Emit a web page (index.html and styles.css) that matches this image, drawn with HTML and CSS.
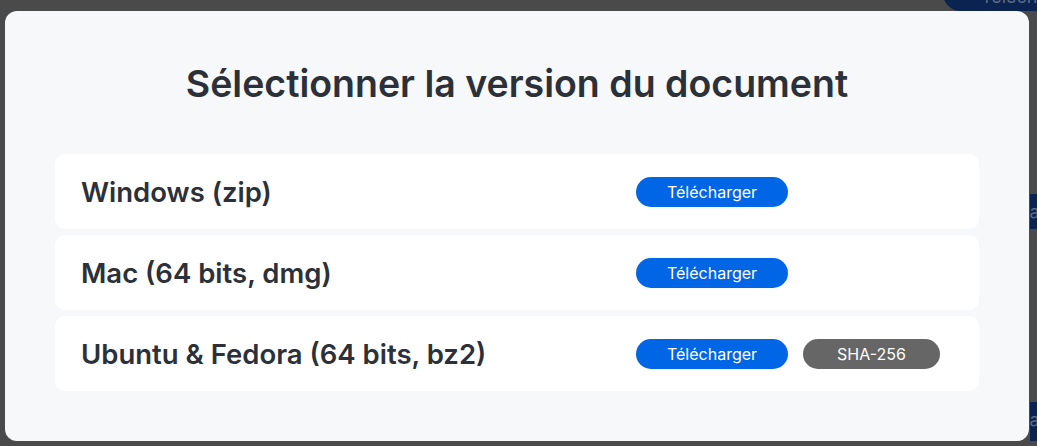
FILE: index.html
```html
<!DOCTYPE html>
<html lang="fr">
<head>
<meta charset="utf-8">
<title>Sélectionner la version du document</title>
<link rel="stylesheet" href="styles.css">
</head>
<body>
<div class="page">
  <div class="bg-btn bg-btn-1">Télécharger</div>
  <div class="bg-btn bg-btn-2">Télécharger</div>
  <div class="bg-btn bg-btn-3">Télécharger</div>
</div>
<div class="modal">
  <h1 class="modal-title">Sélectionner la version du document</h1>
  <div class="versions">
    <div class="version-row">
      <div class="version-name">Windows (zip)</div>
      <div class="version-actions">
        <button class="btn btn-download">Télécharger</button>
      </div>
    </div>
    <div class="version-row">
      <div class="version-name">Mac (64 bits, dmg)</div>
      <div class="version-actions">
        <button class="btn btn-download">Télécharger</button>
      </div>
    </div>
    <div class="version-row">
      <div class="version-name">Ubuntu &amp; Fedora (64 bits, bz2)</div>
      <div class="version-actions">
        <button class="btn btn-download">Télécharger</button>
        <button class="btn btn-sha">SHA-256</button>
      </div>
    </div>
  </div>
</div>
</body>
</html>
```

FILE: styles.css
```css
* { box-sizing: border-box; }
html, body {
  margin: 0;
  padding: 0;
  height: 100%;
  overflow: hidden;
}
body {
  background: #4a4a4a;
  font-family: Inter, "Noto Sans", sans-serif;
}
.page {
  display: flex;
  flex-direction: column;
  align-items: flex-end;
}
.bg-btn {
  height: 35px;
  width: 120px;
  background: #0b2350;
  color: #5c6a82;
  border-radius: 18px 0 0 18px;
  font-size: 18px;
  line-height: 35px;
  padding-left: 38px;
  white-space: nowrap;
  overflow: hidden;
}
.bg-btn-1 {
  margin-top: -24px;
  width: 94px;
  line-height: 41px;
}
.bg-btn-2 {
  margin-top: 183px;
  width: 7px;
  padding-left: 0;
  border-radius: 0;
  text-indent: -57px;
}
.bg-btn-3 {
  margin-top: 173px;
  width: 7px;
  height: 39px;
  padding-left: 0;
  border-radius: 0;
  text-indent: -57px;
}
.modal {
  position: fixed;
  left: 5px;
  top: 11px;
  width: 1024px;
  height: 430px;
  background: #f7f8fa;
  border-radius: 12px;
  padding: 50px 50px 50px;
}
.modal-title {
  margin: 0 0 48px;
  text-align: center;
  font-size: 37.5px;
  line-height: 45px;
  font-weight: 600;
  color: #2c3039;
}
.versions {
  display: flex;
  flex-direction: column;
  gap: 6px;
}
.version-row {
  display: grid;
  grid-template-columns: 1fr 317px;
  align-items: center;
  height: 75px;
  padding: 0 26px;
  background: #ffffff;
  border-radius: 10px;
}
.version-name {
  font-size: 27.5px;
  font-weight: 600;
  color: #2c3039;
}
.version-actions {
  display: flex;
  gap: 15px;
  align-items: center;
}
.btn {
  border: 0;
  height: 30px;
  border-radius: 15px;
  color: #ffffff;
  font-family: Inter, "Noto Sans", sans-serif;
  font-size: 16px;
  font-weight: 400;
  padding: 0;
  text-align: center;
}
.btn-download {
  width: 152px;
  background: #0066e6;
}
.btn-sha {
  width: 137px;
  background: #666666;
}
```
